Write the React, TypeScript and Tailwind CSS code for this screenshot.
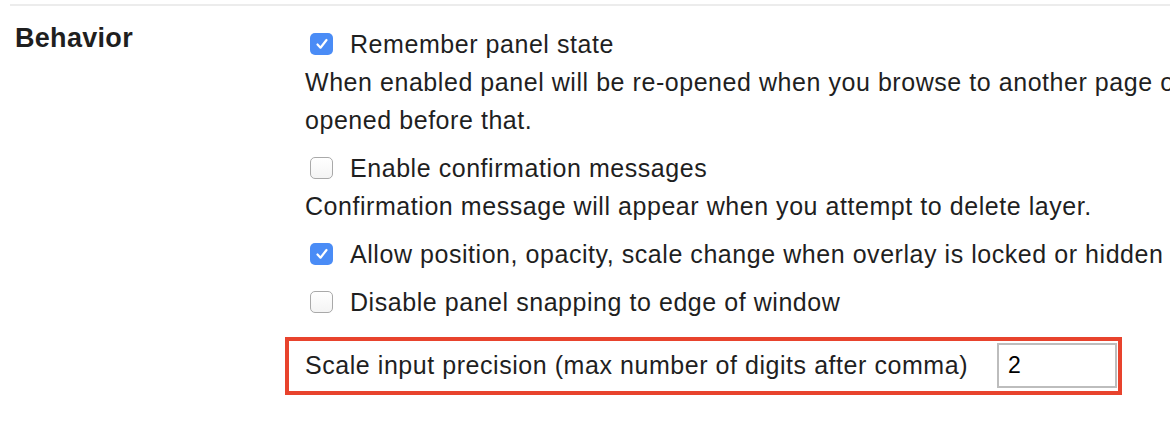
function Checkbox({ checked }: { checked: boolean }) {
  if (checked) {
    return (
      <span className="flex h-[22px] w-[23px] shrink-0 items-center justify-center rounded-[5px] bg-[#4a8cf6]">
        <svg className="h-[14px] w-[14px]" viewBox="0 0 14 14" fill="none">
          <path d="M2.5 7.5l3 3.2L11.5 3" stroke="#fff" strokeWidth={2.2} strokeLinecap="round" strokeLinejoin="round" />
        </svg>
      </span>
    );
  }
  return (
    <span className="h-[22px] w-[23px] shrink-0 rounded-[5px] border border-[#a9a9a9] bg-gradient-to-b from-white to-[#f4f4f4]" />
  );
}

function CheckRow({ checked, label, className = "" }: { checked: boolean; label: string; className?: string }) {
  return (
    <label className={`flex items-center gap-[17px] pl-[5px] leading-[38px] whitespace-nowrap ${className}`}>
      <Checkbox checked={checked} />
      <span>{label}</span>
    </label>
  );
}

export default function App() {
  return (
    <div className="h-[432px] w-[1170px] overflow-hidden bg-white pt-[4px] text-[#1f1f1f] font-['Liberation_Sans',Arial,sans-serif]">
      <div className="ml-[10px] h-[2px] bg-[#ececec]" />

      <div className="flex pt-[19px]">
        <div className="w-[305px] shrink-0 pl-[15px]">
          <h2 className="text-[27px] font-bold leading-none tracking-[0.3px]">Behavior</h2>
        </div>

        <div className="w-[930px] shrink-0 text-[25px] tracking-[0.55px]">
          <CheckRow checked label="Remember panel state" />
          <p className="leading-[38px]">
            When enabled panel will be re-opened when you browse to another page or opened before that.
          </p>

          <CheckRow checked={false} label="Enable confirmation messages" className="mt-[10px]" />
          <p className="leading-[38px]">Confirmation message will appear when you attempt to delete layer.</p>

          <CheckRow checked label="Allow position, opacity, scale change when overlay is locked or hidden" className="mt-[10px]" />
          <CheckRow checked={false} label="Disable panel snapping to edge of window" className="mt-[10px]" />

          <div className="ml-[-20px] mt-[16px] w-[837px] border-4 border-[#e8432d] pt-[2px] pb-[3px] pl-[16px] pr-px">
            <div className="flex items-center justify-between">
              <span className="whitespace-nowrap">Scale input precision (max number of digits after comma)</span>
              <input
                type="text"
                defaultValue="2"
                className="h-[45px] w-[120px] border-2 border-[#bdbdbd] bg-white pl-[9px] text-[23px] text-black outline-none"
              />
            </div>
          </div>
        </div>
      </div>
    </div>
  );
}
